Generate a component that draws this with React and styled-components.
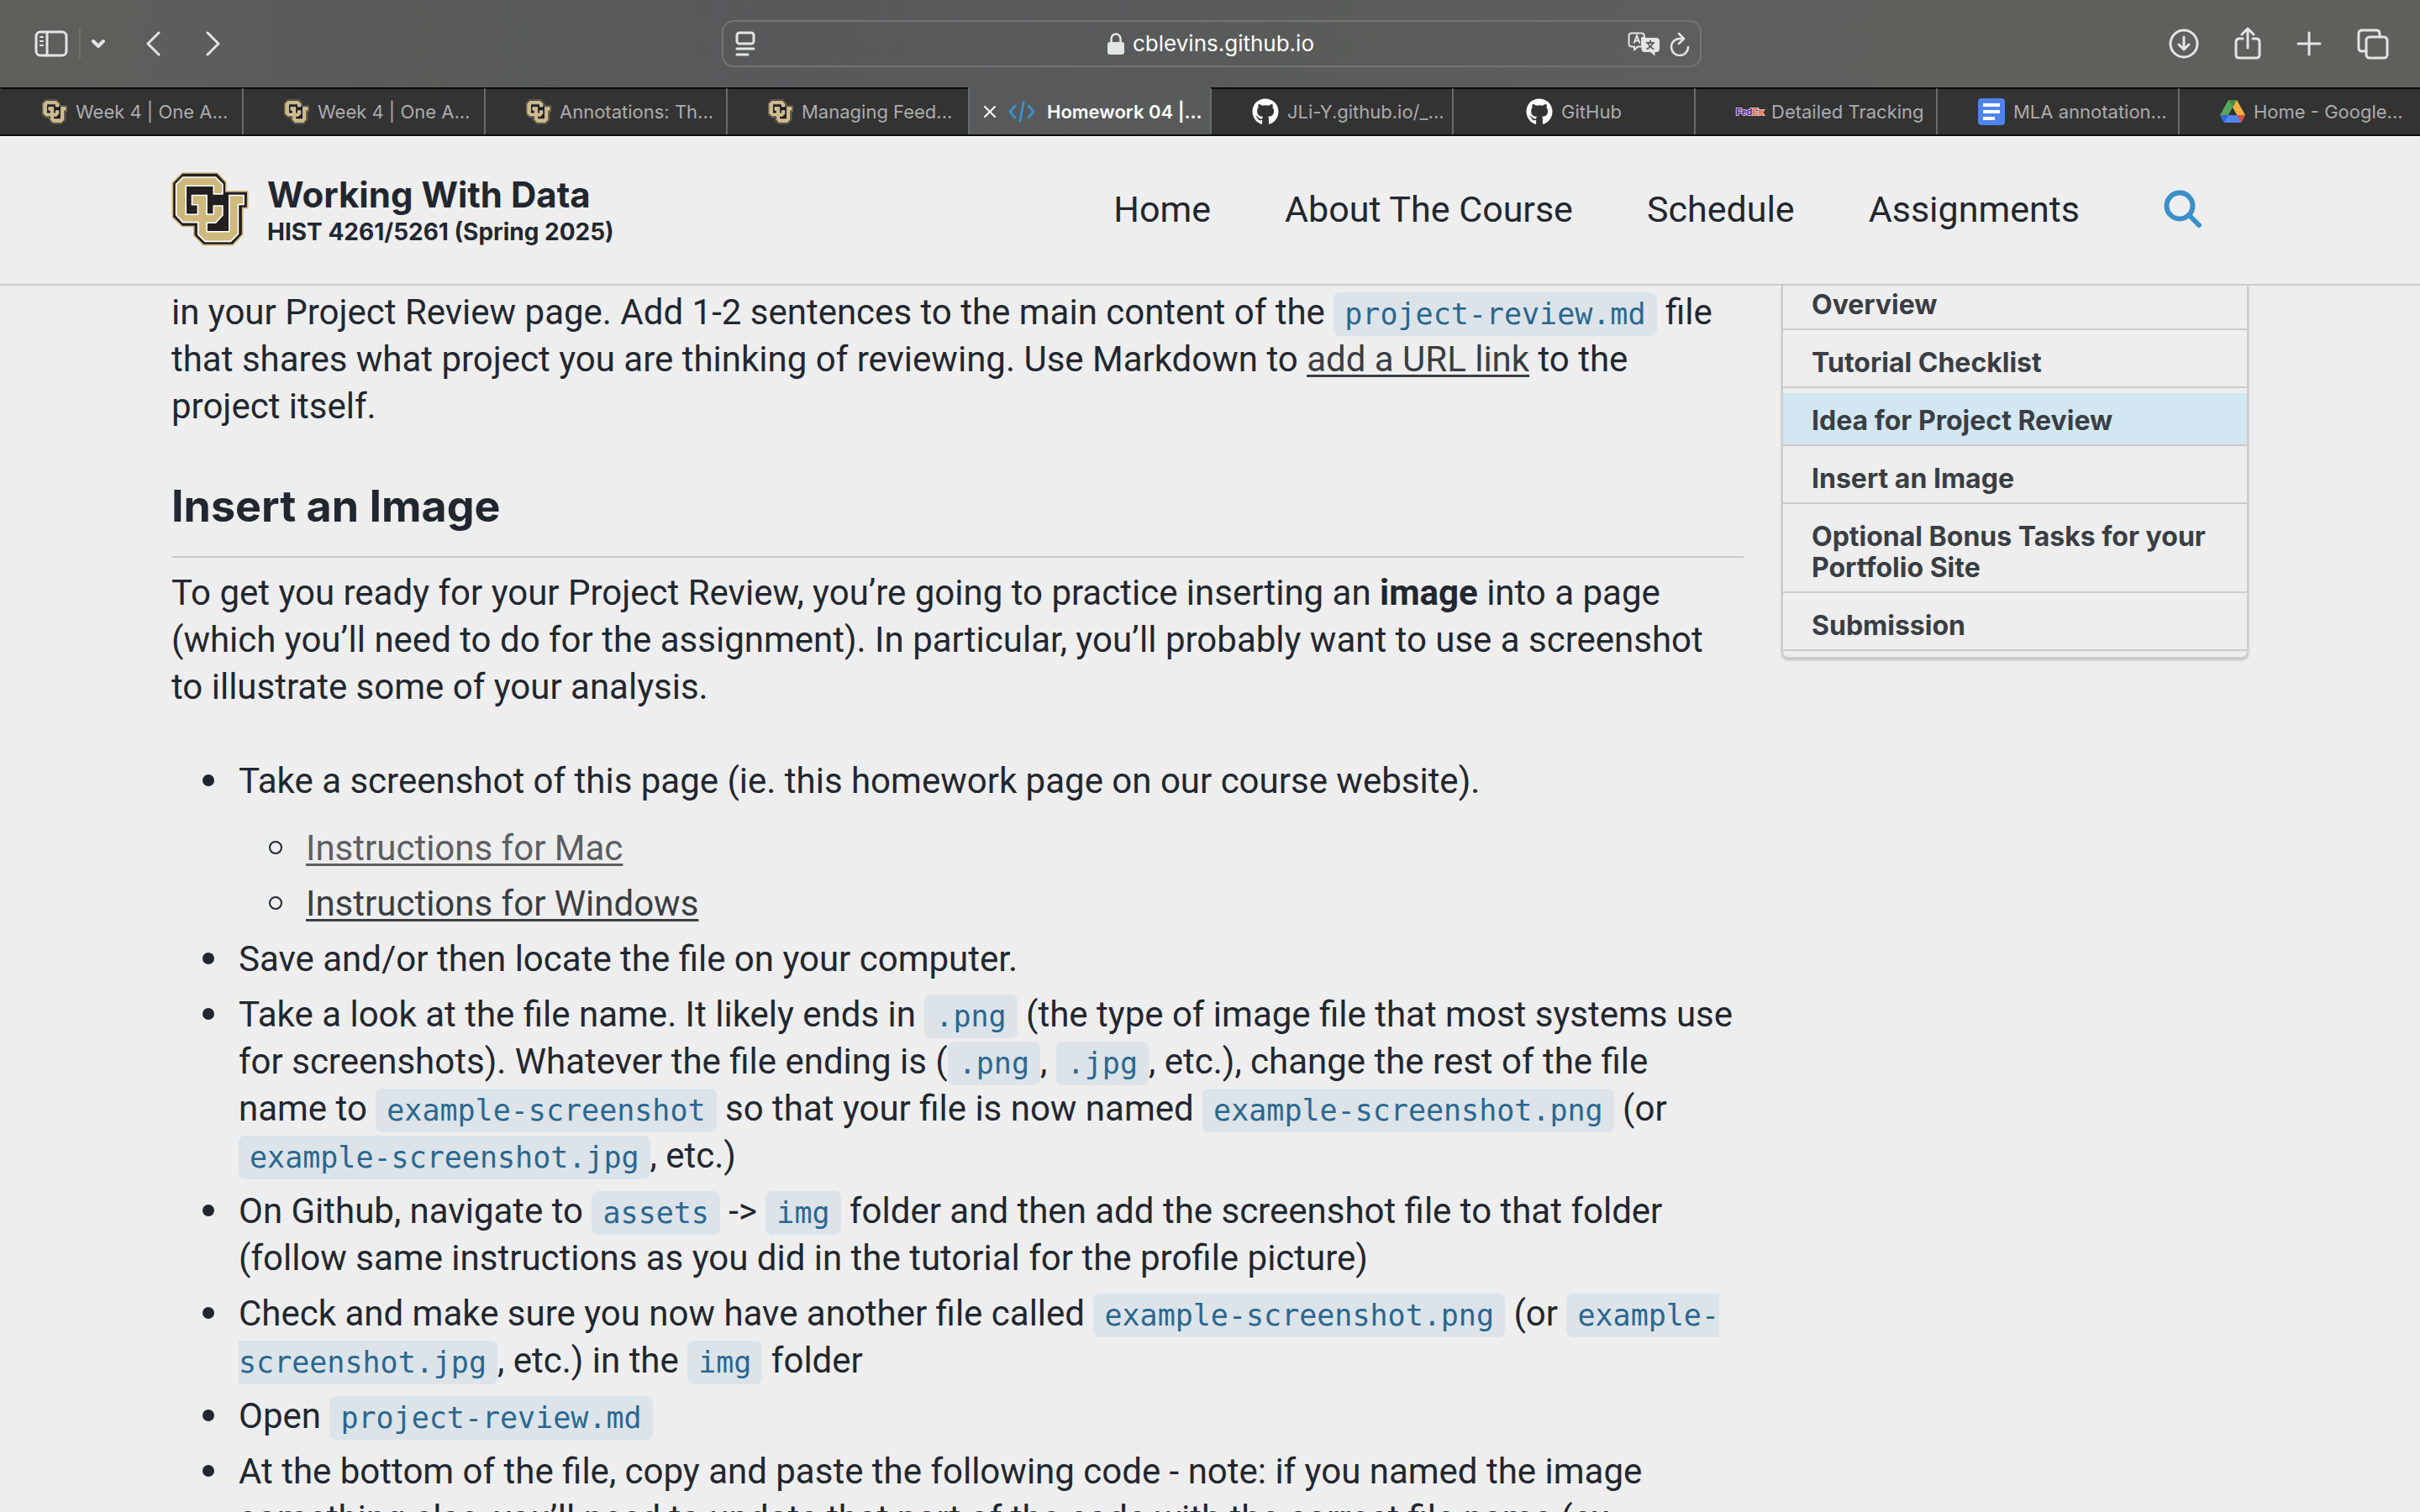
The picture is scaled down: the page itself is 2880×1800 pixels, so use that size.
import React from 'react';
import styled, { createGlobalStyle, css } from 'styled-components';
import { FaGithub } from 'react-icons/fa';

const GlobalStyle = createGlobalStyle`
  *, *::before, *::after { box-sizing: border-box; }
  html, body { margin: 0; background: #eeeeee; }
  body {
    font-family: Inter, Roboto, "Liberation Sans", sans-serif;
    color: #22272f;
    overflow: hidden;
  }
  button { background: none; border: 0; padding: 0; margin: 0; color: inherit; font: inherit; display: flex; }
  svg { display: block; flex: none; }
`;

const Window = styled.div`
  height: 100vh;
  display: flex;
  flex-direction: column;
  overflow: hidden;
`;

/* ---------- browser chrome ---------- */

const Chrome = styled.div`
  flex: none;
  color: #e4e4e3;
  background: linear-gradient(90deg, #5f5f5b 0%, #5c5d5a 10%, #585959 24%, #57595a 42%, #5c5d5b 60%, #5f5f5c 78%, #5f5f5c 100%);
`;

const Toolbar = styled.div`
  height: 104px;
  padding: 0 37px 0 41px;
  display: grid;
  grid-template-columns: 1fr 1166px 1fr;
  align-items: center;
`;

const ToolGroup = styled.div`
  display: flex;
  align-items: center;
  gap: ${(p) => p.$gap}px;
  justify-content: ${(p) => (p.$end ? 'flex-end' : 'flex-start')};
`;

const Divider = styled.span`
  width: 2px;
  height: 36px;
  background: #70706e;
`;

const AddressBar = styled.form`
  height: 56px;
  margin: 0;
  padding: 0 12px 0 14px;
  border: 2px solid #737371;
  border-radius: 14px;
  display: grid;
  grid-template-columns: 1fr auto 1fr;
  align-items: center;
`;

const AddressField = styled.label`
  display: flex;
  align-items: center;
  gap: 10px;
`;

const AddressInput = styled.input`
  width: 220px;
  padding: 0;
  border: 0;
  outline: 0;
  background: none;
  color: #ffffff;
  font: 400 26px/36px Inter, Roboto, sans-serif;
`;

const TabStrip = styled.div`
  height: 58px;
  display: grid;
  grid-template-columns: repeat(10, minmax(0, 1fr));
  border-bottom: 2px solid #0b0b0b;
`;

const Tab = styled.div`
  display: flex;
  align-items: center;
  gap: 10px;
  padding-left: 48px;
  border-top: 2px solid #0b0b0b;
  border-left: 2px solid #6a6a68;
  background: #333333;
  color: #acacac;
  white-space: nowrap;
  ${(p) => p.$centered && css`
    padding-left: 0;
    justify-content: center;
  `}
  ${(p) => p.$active && css`
    padding-left: 16px;
    gap: 14px;
    border-top-color: transparent;
    background: none;
    color: #ffffff;
  `}
  &:first-child { border-left-color: transparent; }
`;

const TabTitle = styled.button`
  font-size: 22px;
  line-height: 32px;
  font-weight: ${(p) => (p.$active ? 600 : 400)};
`;

const FedEx = styled.span`
  width: 32px;
  font: 700 11px/16px "Liberation Sans", sans-serif;
  color: #5a1fa3;
  -webkit-text-stroke: 2px #c9bcd8;
  paint-order: stroke fill;
  b { color: #ff6a13; }
`;

/* ---------- site header ---------- */

const Header = styled.header`
  flex: none;
  height: 178px;
  padding: 0 204px 2px;
  display: flex;
  align-items: center;
  justify-content: space-between;
  border-bottom: 2px solid #cccccc;
`;

const Brand = styled.a`
  display: flex;
  align-items: center;
  gap: 22px;
  color: inherit;
  text-decoration: none;
`;

const BrandText = styled.span`
  display: flex;
  flex-direction: column;
  padding-top: 4px;
  font-weight: 700;
`;

const BrandTitle = styled.span`
  font-size: 42px;
  line-height: 50px;
`;

const BrandSubtitle = styled.span`
  font-size: 28px;
  line-height: 38px;
`;

const Nav = styled.nav`
  display: flex;
  align-items: center;
  gap: 88px;
  padding-right: 55px;
`;

const NavLink = styled.a`
  font-family: Roboto, Inter, sans-serif;
  font-size: 43px;
  line-height: 56px;
  color: inherit;
  text-decoration: none;
`;

const SearchButton = styled.button`
  margin-left: 12px;
`;

/* ---------- article ---------- */

const Page = styled.div`
  flex: 1;
  min-height: 0;
  overflow: hidden;
  padding: 0 204px;
  display: grid;
  grid-template-columns: minmax(0, 1fr) 556px;
  gap: 44px;
  align-items: start;
`;

const Article = styled.main`
  padding-top: 4px;
  font-family: Roboto, Inter, sans-serif;
  font-size: 42px;
  line-height: 56px;
`;

const Paragraph = styled.p`
  margin: 0 0 56px;
`;

const Heading = styled.h2`
  margin: 0 0 14px;
  padding: 2px 0 26px;
  border-bottom: 2px solid #cccccc;
  font-family: Inter, Roboto, sans-serif;
  font-size: 52px;
  line-height: 66px;
  font-weight: 700;
`;

const Code = styled.code`
  padding: 6px 13px;
  border-radius: 8px;
  background: #dce3e9;
  color: #2a678f;
  font-family: "DejaVu Sans Mono", "Liberation Mono", monospace;
  font-size: 35px;
  line-height: 36px;
`;

const TextLink = styled.a`
  color: ${(p) => (p.$visited ? '#5c5e63' : '#3a3e43')};
  text-decoration: underline;
  text-decoration-thickness: 3px;
  text-underline-offset: 4px;
`;

const List = styled.ul`
  list-style: none;
  margin: 0;
  padding: 0 0 0 80px;
`;

const SubList = styled(List)`
  margin-top: 24px;
`;

const Item = styled.li`
  margin-bottom: 10px;
  &::before {
    content: '';
    display: inline-block;
    width: 16px;
    height: 16px;
    margin: 0 28px 0 -44px;
    vertical-align: 7px;
    border: ${(p) => (p.$hollow ? '2px solid #22272f' : '1px solid transparent')};
    border-radius: 50%;
    background: ${(p) => (p.$hollow ? 'none' : '#22272f padding-box')};
  }
`;

/* ---------- table of contents ---------- */

const Contents = styled.nav`
  padding-bottom: 7px;
  border: 2px solid #cccccc;
  border-top: 0;
  border-radius: 0 0 8px 8px;
  box-shadow: 0 2px 3px rgba(0, 0, 0, 0.2);
`;

const ContentsList = styled.ul`
  list-style: none;
  margin: 0;
  padding: 0;
`;

const ContentsItem = styled.li`
  padding-top: 6px;
  border-bottom: 2px solid #cccccc;
  &:first-child { padding-top: 0; }
  &:first-child > a { padding-top: 4px; }
`;

const ContentsLink = styled.a`
  display: block;
  padding: 14px 34px 10px;
  background: ${(p) => (p.$current ? '#d2e7f2' : 'none')};
  color: #3a3e44;
  font-size: 32px;
  line-height: 37px;
  font-weight: 700;
  text-decoration: none;
`;

/* ---------- drawings ---------- */

const Stroke = ({ w, h, box, sw = 3, children }) => (
  <svg width={w} height={h} viewBox={box || `0 0 ${w} ${h}`} fill="none" stroke="currentColor" strokeWidth={sw} strokeLinecap="round" strokeLinejoin="round" aria-hidden="true">
    {children}
  </svg>
);

const CULogo = ({ w, h }) => (
  <svg width={w} height={h} viewBox="28 28 276 266" aria-hidden="true">
    <path d="M66 31H192L223 64V97H301V157H283V252L248 290H142L108 256V223H66L31 190V66Z" fill="#231f20" stroke="#cfb87c" strokeWidth="5" />
    <path d="M68 46H186L211 71V106H179V77H79V180H122V145H101V111H154V179H179V149H211V183L186 210H154V242H235V111H287V144H267V250L240 277H148L123 252V208H68L44 182V71Z" fill="#cfb87c" stroke="#ffffff" strokeWidth="5" />
  </svg>
);

const DocsIcon = () => (
  <svg width="32" height="32" viewBox="0 0 32 32" aria-hidden="true">
    <rect width="32" height="32" rx="4" fill="#5083ec" />
    <path d="M6 6h20v4H6zM6 14h20v4H6zM6 22h14v4H6z" fill="#ffffff" />
  </svg>
);

const DriveIcon = () => (
  <svg width="30" height="28" viewBox="0 0 30 28" aria-hidden="true">
    <path d="M10 0h10L15 9 5 27 0 18z" fill="#58a55c" />
    <path d="M10 0h10l10 18H20z" fill="#f1b03f" />
    <path d="M10 0h10l-5 9z" fill="#408b46" />
    <path d="M0 18h30l-5 9H5z" fill="#5085ed" />
    <path d="M0 18h10l-5 9z" fill="#3367d6" />
    <path d="M20 18h10l-5 9z" fill="#d85040" />
    <path d="M15 9l5 9H10z" fill="#333333" />
  </svg>
);

const CodeIcon = () => (
  <svg width="32" height="26" viewBox="0 0 32 26" fill="none" stroke="#3d8fc9" strokeWidth="3" strokeLinecap="round" strokeLinejoin="round" aria-hidden="true">
    <path d="M8 6L2 13l6 7M24 6l6 7-6 7M18 2l-4 22" />
  </svg>
);

const TranslateIcon = () => (
  <svg width="38" height="29" viewBox="0 0 38 29" aria-hidden="true">
    <path d="M5 1.500H16Q20 1.500 20 5.500V7H17V17.500H12L8 21.500V17.500H5Q1.500 17.500 1.500 14V5Q1.500 1.500 5 1.500Z" fill="none" stroke="currentColor" strokeWidth="2" strokeLinejoin="round" />
    <path d="M7.500 13.500L11 4.500L14.500 13.500M8.700 10.500H13.300" fill="none" stroke="currentColor" strokeWidth="2" />
    <path d="M20 7H34Q38 7 38 11V20Q38 24 34 24H32.500V28.500L27 24H20Q16.500 24 16.500 20V11Q16.500 7 20 7Z" fill="currentColor" />
    <path d="M22 13H32M27 10V13M30 13Q28.500 18 22.500 20.500M24 13Q26 18 31.500 20.500" fill="none" stroke="#5b5c5a" strokeWidth="1.800" />
  </svg>
);

const tabs = [
  { title: 'Week 4 | One A...', icon: <CULogo w={30} h={30} /> },
  { title: 'Week 4 | One A...', icon: <CULogo w={30} h={30} /> },
  { title: 'Annotations: Th...', icon: <CULogo w={30} h={30} /> },
  { title: 'Managing Feed...', icon: <CULogo w={30} h={30} /> },
  { title: 'Homework 04 |...', icon: <CodeIcon />, active: true },
  { title: 'JLi-Y.github.io/_...', icon: <FaGithub size={32} color="#ffffff" /> },
  { title: 'GitHub', icon: <FaGithub size={32} color="#ffffff" />, centered: true },
  { title: 'Detailed Tracking', icon: <FedEx aria-hidden="true">Fed<b>Ex</b></FedEx> },
  { title: 'MLA annotation...', icon: <DocsIcon /> },
  { title: 'Home - Google...', icon: <DriveIcon /> },
];

const contents = [
  'Overview',
  'Tutorial Checklist',
  'Idea for Project Review',
  'Insert an Image',
  'Optional Bonus Tasks for your Portfolio Site',
  'Submission',
];

function BrowserChrome() {
  return (
    <Chrome>
      <Toolbar>
        <ToolGroup $gap={48}>
          <ToolGroup $gap={13}>
            <button type="button" aria-label="Show sidebar">
              <Stroke w={40} h={32}>
                <rect x="2" y="2" width="36" height="28" rx="5" />
                <path d="M15 2v28" />
                <path d="M7 8h3M7 13h3M7 18h3" strokeWidth="2" />
              </Stroke>
            </button>
            <Divider />
            <button type="button" aria-label="Tab groups">
              <Stroke w={16} h={12} sw={4}><path d="M2 3l6 6 6-6" /></Stroke>
            </button>
          </ToolGroup>
          <ToolGroup $gap={54}>
            <button type="button" aria-label="Back">
              <Stroke w={18} h={30}><path d="M16 2L3 15l13 13" /></Stroke>
            </button>
            <button type="button" aria-label="Forward">
              <Stroke w={18} h={30}><path d="M2 2l13 13L2 28" /></Stroke>
            </button>
          </ToolGroup>
        </ToolGroup>
        <AddressBar onSubmit={(e) => e.preventDefault()}>
          <button type="button" aria-label="Reader">
            <Stroke w={24} h={30}>
              <rect x="2" y="2" width="20" height="13" rx="3" />
              <path d="M2 21h20M2 28h13" />
            </Stroke>
          </button>
          <AddressField>
            <svg width="20" height="26" viewBox="0 0 20 26" aria-hidden="true">
              <rect x="0" y="11" width="20" height="15" rx="3" fill="currentColor" />
              <path d="M4.500 12V7a5.500 5.500 0 0 1 11 0v5" fill="none" stroke="currentColor" strokeWidth="2.500" />
            </svg>
            <AddressInput aria-label="Address" defaultValue="cblevins.github.io" />
          </AddressField>
          <ToolGroup $gap={12} $end>
            <button type="button" aria-label="Translate"><TranslateIcon /></button>
            <button type="button" aria-label="Reload">
              <Stroke w={24} h={29} sw={2.5}>
                <path d="M14 8H12A10 10 0 1 0 22 18M11 2l6 6-6 6" />
              </Stroke>
            </button>
          </ToolGroup>
        </AddressBar>
        <ToolGroup $gap={42} $end>
          <button type="button" aria-label="Downloads">
            <Stroke w={36} h={36}>
              <circle cx="18" cy="18" r="16" />
              <path d="M18 10v15M12 19l6 6 6-6" />
            </Stroke>
          </button>
          <button type="button" aria-label="Share">
            <Stroke w={32} h={40}>
              <path d="M10 14H6q-4 0-4 4v15q0 4 4 4h20q4 0 4-4V18q0-4-4-4h-4M16 25V3M9 9l7-7 7 7" />
            </Stroke>
          </button>
          <button type="button" aria-label="New tab">
            <Stroke w={30} h={30}><path d="M15 2v26M2 15h26" /></Stroke>
          </button>
          <button type="button" aria-label="Show all tabs">
            <Stroke w={38} h={37}>
              <rect x="11" y="10" width="25" height="25" rx="4" />
              <path d="M11 27H6q-4 0-4-4V6q0-4 4-4h17q4 0 4 4v4" />
            </Stroke>
          </button>
        </ToolGroup>
      </Toolbar>
      <TabStrip>
        {tabs.map((tab, i) => (
          <Tab key={i} $active={tab.active} $centered={tab.centered}>
            {tab.active && (
              <button type="button" aria-label="Close tab">
                <Stroke w={16} h={16} sw={2}><path d="M2 2l12 12M14 2L2 14" /></Stroke>
              </button>
            )}
            {tab.icon}
            <TabTitle type="button" $active={tab.active}>{tab.title}</TabTitle>
          </Tab>
        ))}
      </TabStrip>
    </Chrome>
  );
}

function SiteHeader() {
  return (
    <Header>
      <Brand href="#home">
        <CULogo w={92} h={88} />
        <BrandText>
          <BrandTitle>Working With Data</BrandTitle>
          <BrandSubtitle>HIST 4261/5261 (Spring 2025)</BrandSubtitle>
        </BrandText>
      </Brand>
      <Nav>
        <NavLink href="#home">Home</NavLink>
        <NavLink href="#about">About The Course</NavLink>
        <NavLink href="#schedule">Schedule</NavLink>
        <NavLink href="#assignments">Assignments</NavLink>
        <SearchButton type="button" aria-label="Search">
          <svg width="46" height="46" viewBox="0 0 46 46" fill="none" stroke="#3d8fc9" strokeWidth="6" strokeLinecap="round" aria-hidden="true">
            <circle cx="19" cy="19" r="15.500" />
            <path d="M30 30l12 12" />
          </svg>
        </SearchButton>
      </Nav>
    </Header>
  );
}

export default function App() {
  return (
    <Window>
      <GlobalStyle />
      <BrowserChrome />
      <SiteHeader />
      <Page>
        <Article>
          <Paragraph>
            in your Project Review page. Add 1-2 sentences to the main content of the <Code>project-review.md</Code> file
            that shares what project you are thinking of reviewing. Use Markdown to <TextLink href="#url">add a URL link</TextLink> to the
            project&nbsp;itself.
          </Paragraph>
          <Heading>Insert an Image</Heading>
          <Paragraph>
            To get you ready for your Project Review, you’re going to practice inserting an <b>image</b> into a page
            (which you’ll need to do for the assignment). In particular, you’ll probably want to use a screenshot
            to&nbsp;illustrate some of your analysis.
          </Paragraph>
          <List>
            <Item>
              Take a screenshot of this page (ie. this homework page on our course website).
              <SubList>
                <Item $hollow><TextLink $visited href="#mac">Instructions for Mac</TextLink></Item>
                <Item $hollow><TextLink href="#windows">Instructions for Windows</TextLink></Item>
              </SubList>
            </Item>
            <Item>Save and/or then locate the file on your computer.</Item>
            <Item>
              Take a look at the file name. It likely ends in <Code>.png</Code> (the type of image file that most systems use
              for screenshots). Whatever the file ending is (<Code>.png</Code>, <Code>.jpg</Code>, etc.), change the rest of the file
              name to <Code>example-screenshot</Code> so that your file is now named <Code>example-screenshot.png</Code> (or <Code>example-screenshot.jpg</Code>, etc.)
            </Item>
            <Item>
              On Github, navigate to <Code>assets</Code> {'->'} <Code>img</Code> folder and then add the screenshot file to that folder
              (follow same instructions as you did in the tutorial for the profile picture)
            </Item>
            <Item>
              Check and make sure you now have another file called <Code>example-screenshot.png</Code> (or <Code>example-screenshot.jpg</Code>, etc.) in the <Code>img</Code> folder
            </Item>
            <Item>Open <Code>project-review.md</Code></Item>
            <Item>
              At the bottom of the file, copy and paste the following code - note: if you named the image
              something else, you’ll need to update that part of the code with the correct file name (ex.
            </Item>
          </List>
        </Article>
        <Contents aria-label="On this page">
          <ContentsList>
            {contents.map((title, i) => (
              <ContentsItem key={title}>
                <ContentsLink href={`#section-${i}`} $current={i === 2}>{title}</ContentsLink>
              </ContentsItem>
            ))}
          </ContentsList>
        </Contents>
      </Page>
    </Window>
  );
}
